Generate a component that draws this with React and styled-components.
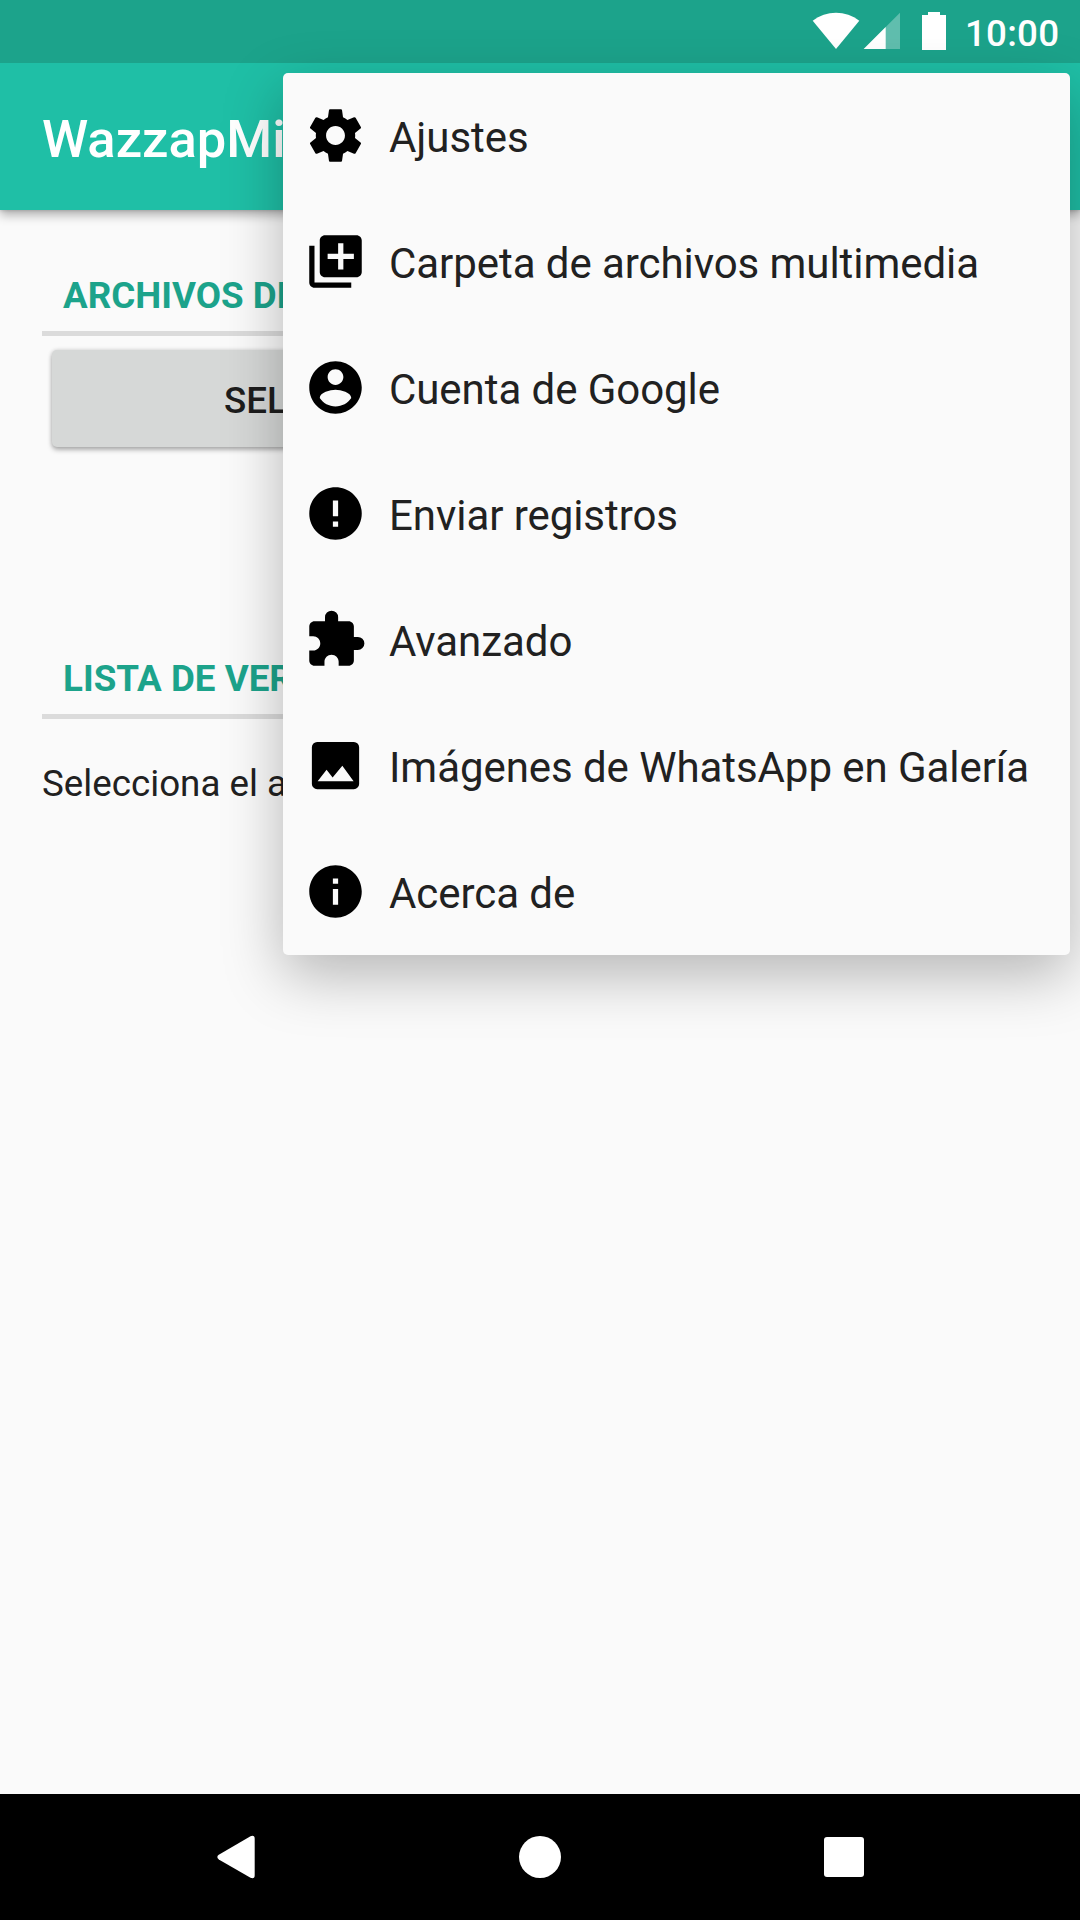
import styled, { createGlobalStyle } from "styled-components";
import { MdError, MdExtension, MdInfo, MdLibraryAdd } from "react-icons/md";

const GlobalStyle = createGlobalStyle`
  * {
    box-sizing: border-box;
  }

  body {
    margin: 0;
    background: #fafafa;
    color: #212121;
    font-family: Roboto, "Noto Sans", sans-serif;
  }
`;

const Screen = styled.div`
  position: relative;
  width: 1080px;
  height: 1920px;
  display: flex;
  flex-direction: column;
  overflow: hidden;
  white-space: nowrap;
`;

const StatusBar = styled.header`
  height: 63px;
  display: flex;
  justify-content: flex-end;
  padding: 12px 21px 0 0;
  background: #1ca38b;
  color: #fff;

  svg {
    display: block;
    width: 134px;
    height: 38px;
  }
`;

const Clock = styled.span`
  width: 94px;
  margin-left: 19px;
  font-size: 36.75px;
  font-weight: 500;
  letter-spacing: 0.2px;
  line-height: 43px;
`;

const AppBar = styled.div`
  height: 147px;
  flex-shrink: 0;
  display: flex;
  align-items: center;
  padding: 4px 42px 0;
  background: #1fbfa6;
  box-shadow: 0 5px 10px rgba(0, 0, 0, 0.3), 0 0 4px rgba(0, 0, 0, 0.2);
  clip-path: inset(0 0 -30px 0);
  color: #fff;
  font-size: 52.5px;
  font-weight: 500;
`;

const Content = styled.main`
  flex: 1;
  padding: 63px 42px 0;
`;

const Section = styled.section`
  height: 383px;
`;

const SectionTitle = styled.h2`
  height: 63px;
  margin: 0;
  padding: 0 21px;
  border-bottom: 5px solid #dbdbdb;
  color: #1ca38b;
  font-size: 36.75px;
  font-weight: 700;
  line-height: 45px;
`;

const SelectButton = styled.button`
  width: 976px;
  height: 97px;
  margin: 14px 10px 0;
  padding: 3px 0 0 172px;
  border: none;
  border-radius: 5px;
  background: #d6d8d7;
  box-shadow: 0 3px 5px rgba(0, 0, 0, 0.28), 0 0 4px rgba(0, 0, 0, 0.16);
  color: #1d1d1d;
  font: 500 36.75px Roboto, sans-serif;
  text-align: left;
`;

const Message = styled.p`
  margin: 43px 0 0;
  font-size: 36.75px;
  line-height: 43px;
`;

/* overflow menu, floats above the app bar and the page */
const Menu = styled.ul`
  position: absolute;
  top: 73px;
  right: 10px;
  width: 787px;
  margin: 0;
  padding: 0;
  border-radius: 5px;
  background: #fafafa;
  box-shadow: 0 20px 60px rgba(0, 0, 0, 0.28);
  list-style: none;
`;

const MenuItem = styled.li`
  height: 126px;
  display: flex;
  align-items: center;
  gap: 22px;
  padding-left: 21px;
  font-size: 42px;
  letter-spacing: -0.06px;

  svg {
    width: 63px;
    height: 63px;
    margin-bottom: 2px;
    fill: #000;
    color: #000;
  }

  span {
    padding-top: 2px;
  }
`;

const NavBar = styled.nav`
  height: 126px;
  display: flex;
  justify-content: center;
  align-items: center;
  gap: 220px;
  background: #000;

  svg {
    width: 84px;
    height: 84px;
    fill: #fff;
  }
`;

const SettingsIcon = () => (
  <svg viewBox="0 0 24 24">
    <path d="M19.43 12.98c.04-.32.07-.64.07-.98s-.03-.66-.07-.98l2.11-1.65c.19-.15.24-.42.12-.64l-2-3.46c-.12-.22-.39-.3-.61-.22l-2.49 1c-.52-.4-1.08-.73-1.69-.98l-.38-2.65C14.46 2.18 14.25 2 14 2h-4c-.25 0-.46.18-.49.42l-.38 2.65c-.61.25-1.17.59-1.69.98l-2.49-1c-.23-.09-.49 0-.61.22l-2 3.46c-.13.22-.07.49.12.64l2.11 1.65c-.04.32-.07.65-.07.98s.03.66.07.98l-2.11 1.65c-.19.15-.24.42-.12.64l2 3.46c.12.22.39.3.61.22l2.49-1c.52.4 1.08.73 1.69.98l.38 2.65c.03.24.24.42.49.42h4c.25 0 .46-.18.49-.42l.38-2.65c.61-.25 1.17-.59 1.69-.98l2.49 1c.23.09.49 0 .61-.22l2-3.46c.12-.22.07-.49-.12-.64l-2.11-1.65zM12 15.6c-1.99 0-3.6-1.61-3.6-3.6s1.61-3.6 3.6-3.6 3.6 1.61 3.6 3.6-1.61 3.6-3.6 3.6z" />
  </svg>
);

const AccountIcon = () => (
  <svg viewBox="0 0 24 24">
    <path d="M12 2C6.48 2 2 6.48 2 12s4.48 10 10 10 10-4.48 10-10S17.52 2 12 2zm0 3c1.66 0 3 1.34 3 3s-1.34 3-3 3-3-1.34-3-3 1.34-3 3-3zm0 14.2c-2.5 0-4.71-1.28-6-3.22.03-1.99 4-3.08 6-3.08 1.99 0 5.97 1.09 6 3.08-1.29 1.94-3.5 3.22-6 3.22z" />
  </svg>
);

const GalleryIcon = () => (
  <svg viewBox="0 0 24 24">
    <path
      fillRule="evenodd"
      d="M5 3h14a2 2 0 0 1 2 2v14a2 2 0 0 1-2 2H5a2 2 0 0 1-2-2V5a2 2 0 0 1 2-2zM5.2 18h13.7l-4.3-5.9-3.7 4.5-2.3-3z"
    />
  </svg>
);

const menuItems = [
  { label: "Ajustes", Icon: SettingsIcon },
  { label: "Carpeta de archivos multimedia", Icon: MdLibraryAdd },
  { label: "Cuenta de Google", Icon: AccountIcon },
  { label: "Enviar registros", Icon: MdError },
  { label: "Avanzado", Icon: MdExtension },
  { label: "Imágenes de WhatsApp en Galería", Icon: GalleryIcon },
  { label: "Acerca de", Icon: MdInfo },
];

export default function App() {
  return (
    <Screen>
      <GlobalStyle />
      <StatusBar>
        <svg viewBox="0 0 134 38" fill="#fff">
          <path d="M0.7 8.8C14-1.9 34-1.9 47.3 8.8L24 37z" />
          <path d="M88 .7V37H51.7z" opacity=".3" />
          <path d="M73.7 15V37H51.7z" />
          <path d="M116 0h12v3h6v35h-24V3h6z" />
        </svg>
        <Clock>10:00</Clock>
      </StatusBar>
      <AppBar>WazzapMigrator</AppBar>
      <Content>
        <Section>
          <SectionTitle>ARCHIVOS DE WHATSAPP</SectionTitle>
          <SelectButton>SELECCIONAR ARCHIVOS</SelectButton>
        </Section>
        <Section>
          <SectionTitle>LISTA DE VERIFICACIÓN</SectionTitle>
          <Message>Selecciona el archivo</Message>
        </Section>
      </Content>
      <NavBar>
        <svg viewBox="0 0 84 84">
          <path d="M24.8 39.8 56.5 21.2Q60.7 19.5 60.7 24V60Q60.7 64.5 56.5 62.8L24.8 44.4Q21.8 42 24.8 39.8z" />
        </svg>
        <svg viewBox="0 0 84 84">
          <circle cx="42" cy="42" r="21" />
        </svg>
        <svg viewBox="0 0 84 84">
          <rect x="22" y="22" width="40" height="40" rx="3" />
        </svg>
      </NavBar>
      <Menu>
        {menuItems.map(({ label, Icon }) => (
          <MenuItem key={label}>
            <Icon />
            <span>{label}</span>
          </MenuItem>
        ))}
      </Menu>
    </Screen>
  );
}
